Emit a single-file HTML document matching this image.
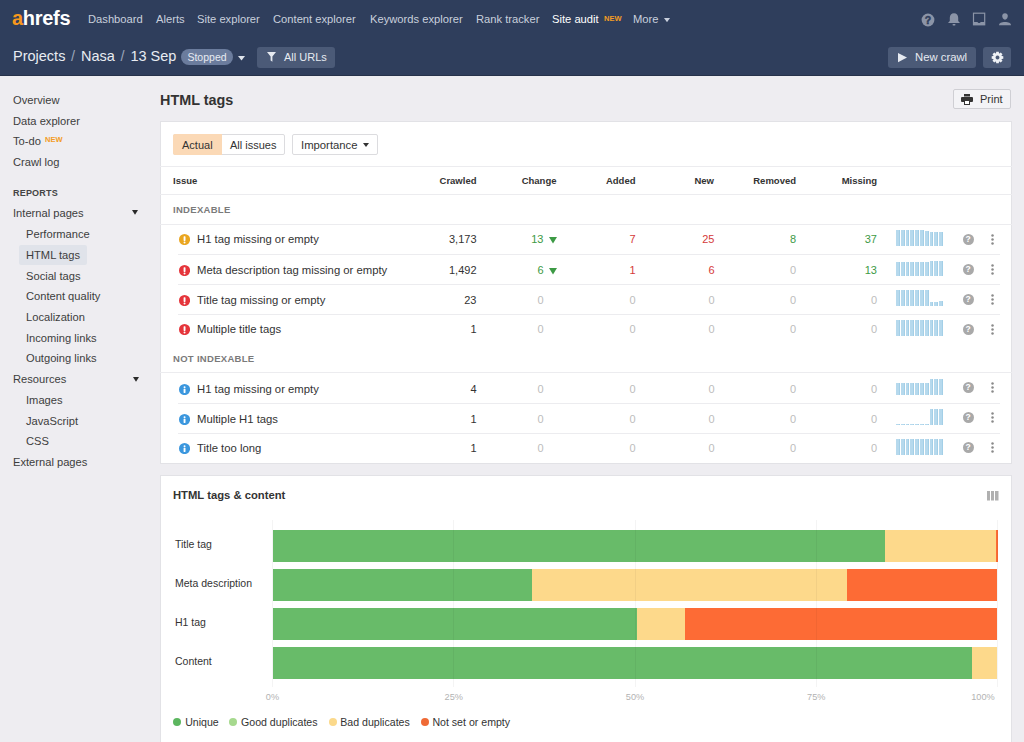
<!DOCTYPE html>
<html><head><meta charset="utf-8">
<style>
*{box-sizing:border-box;margin:0;padding:0}
html,body{width:1024px;height:742px;overflow:hidden;background:#eeedf1;font-family:"Liberation Sans",sans-serif;color:#333;}
.a{position:absolute;white-space:nowrap}
#hdr{position:absolute;left:0;top:0;width:1024px;height:76px;background:#2f3e5c;border-bottom:1px solid #26324a}
.nav{position:absolute;top:11px;font-size:11.2px;line-height:16px;color:#c9d0dd}
.new{font-size:7.5px;font-weight:bold;color:#f39c24;position:absolute}
.hbtn{position:absolute;background:#4b5a77;border-radius:3px}
.side{position:absolute;left:13px;font-size:11.15px;line-height:14px;color:#3d3d3d}
.sub{left:26px}
.card{position:absolute;background:#fff;border:1px solid #e2e2e6}
.th{font-size:9.5px;font-weight:bold;color:#333;line-height:12px}
.sec{font-size:9.5px;font-weight:bold;color:#7a7a7a;letter-spacing:0.3px;line-height:12px}
.line{position:absolute;height:1px;background:#ececef}
.iss{font-size:11.3px;line-height:14px;color:#333}
.num{font-size:11px;line-height:14px;text-align:right;width:60px}
.z{color:#bdbdbd}
.g{color:#3d9a45}
.r{color:#d53a3a}
.ico{position:absolute;width:11px;height:11px;border-radius:50%;color:#fff;font-size:8px;font-weight:bold;text-align:center;line-height:11px}
.help{position:absolute;width:11px;height:11px;border-radius:50%;background:#a9a9a9;color:#fff;font-size:8.5px;font-weight:bold;text-align:center;line-height:11px}
.kb{position:absolute;width:3px;height:11px}
.kb i{display:block;width:2.5px;height:2.5px;border-radius:50%;background:#8a8a8a;margin-bottom:1.5px}
.spark{position:absolute;width:48px;height:16px}
.spark i{position:absolute;bottom:0;width:3.8px;background:#b6d9ed;box-shadow:inset -1px 0 0 #a3cfe7}
.lbl{font-size:10.5px;line-height:14px;color:#333}
.pct{font-size:9.2px;line-height:10px;color:#b3b3b3;text-align:center;width:40px}
.bar{position:absolute;height:32px}
.leg{font-size:10.6px;line-height:14px;color:#333}
.dot{position:absolute;width:8px;height:8px;border-radius:50%}
</style></head><body>
<div id="hdr">
  <div class="a" style="left:12px;top:5px;font-size:20px;font-weight:bold;color:#fff;line-height:26px;letter-spacing:-0.3px"><span style="color:#f7981d">a</span>hrefs</div>
  <div class="a nav" style="left:88px">Dashboard</div>
  <div class="a nav" style="left:156px">Alerts</div>
  <div class="a nav" style="left:197px">Site explorer</div>
  <div class="a nav" style="left:273px">Content explorer</div>
  <div class="a nav" style="left:370px">Keywords explorer</div>
  <div class="a nav" style="left:476px">Rank tracker</div>
  <div class="a nav" style="left:552px;color:#fff">Site audit</div>
  <div class="new" style="left:604px;top:13.5px">NEW</div>
  <div class="a nav" style="left:633px">More</div>
  <svg class="a" style="left:664px;top:17.5px" width="6" height="4.5" viewBox="0 0 6 4.5"><path d="M0 0H6L3 4.2Z" fill="#c9d0dd"/></svg>

  <!-- right icons -->
  <svg class="a" style="left:921px;top:13px" width="14" height="14" viewBox="0 0 14 14"><circle cx="7" cy="7" r="6.4" fill="#8b94a7"/><text x="7" y="10.8" font-size="10.5" font-weight="bold" text-anchor="middle" fill="#2f3e5c" stroke="#2f3e5c" stroke-width="0.5" font-family="Liberation Sans">?</text></svg>
  <svg class="a" style="left:947px;top:12px" width="14" height="14" viewBox="0 0 14 14"><path d="M7 1.2c-2.6 0-4.2 2-4.2 4.6v3.3L1 11h12l-1.8-1.9V5.8C11.2 3.2 9.6 1.2 7 1.2z" fill="#8b94a7"/><rect x="5.5" y="12" width="3" height="1.4" rx="0.7" fill="#8b94a7"/></svg>
  <svg class="a" style="left:972px;top:12px" width="14" height="14" viewBox="0 0 14 14"><rect x="1.5" y="1.2" width="11.2" height="11.6" fill="none" stroke="#8b94a7" stroke-width="1.2"/><path d="M1.2 10H5.3l1.2 1h1.2l1.2-1h3.9v3H1.2z" fill="#8b94a7"/></svg>
  <svg class="a" style="left:998px;top:12px" width="14" height="14" viewBox="0 0 14 14"><path d="M7 1.2c1.8 0 2.8 1.2 2.8 2.9 0 1.9-1.2 3.6-2.8 3.6S4.2 6 4.2 4.1C4.2 2.4 5.2 1.2 7 1.2z" fill="#8b94a7"/><path d="M1 13.2c0-2 2.6-3.2 6-3.2s6 1.2 6 3.2z" fill="#8b94a7"/></svg>

  <!-- second row -->
  <div class="a" style="left:13px;top:47px;font-size:14.5px;line-height:18px;color:#e8ecf2">Projects <span style="color:#9aa4b8;margin:0 2px 0 1.5px">/</span> Nasa <span style="color:#9aa4b8;margin:0 2px 0 1.5px">/</span> 13 Sep</div>
  <div class="a" style="left:181px;top:49px;width:52px;height:16px;border-radius:8px;background:#6b7c9d;color:#e6eaf1;font-size:10.5px;line-height:16px;text-align:center">Stopped</div>
  <svg class="a" style="left:238px;top:56px" width="7" height="5" viewBox="0 0 7 5"><path d="M0 0H7L3.5 4.5Z" fill="#dfe4ec"/></svg>
  <div class="hbtn" style="left:257px;top:47px;width:78px;height:21px"></div>
  <svg class="a" style="left:267px;top:52px" width="9" height="10" viewBox="0 0 9 10"><path d="M0 0H9L5.4 4.6V9.8L3.6 8.6V4.6Z" fill="#e6eaf1"/></svg>
  <div class="a" style="left:284px;top:50px;font-size:11px;line-height:15px;color:#e6eaf1">All URLs</div>

  <div class="hbtn" style="left:888px;top:47px;width:88px;height:21px"></div>
  <svg class="a" style="left:898px;top:53px" width="9" height="10" viewBox="0 0 9 10"><path d="M0 0L9 4.6L0 9.2Z" fill="#e6eaf1"/></svg>
  <div class="a" style="left:915px;top:50px;font-size:11.3px;line-height:15px;color:#e6eaf1">New crawl</div>
  <div class="hbtn" style="left:983px;top:47px;width:28px;height:21px"></div>
  <svg class="a" style="left:990.5px;top:51px" width="13" height="13" viewBox="0 0 24 24"><path fill-rule="evenodd" fill="#eef1f5" d="M19.73 9.27 L22.73 9.60 L22.73 14.40 L19.73 14.73 L19.40 15.53 L21.29 17.89 L17.89 21.29 L15.53 19.40 L14.73 19.73 L14.40 22.73 L9.60 22.73 L9.27 19.73 L8.47 19.40 L6.11 21.29 L2.71 17.89 L4.60 15.53 L4.27 14.73 L1.27 14.40 L1.27 9.60 L4.27 9.27 L4.60 8.47 L2.71 6.11 L6.11 2.71 L8.47 4.60 L9.27 4.27 L9.60 1.27 L14.40 1.27 L14.73 4.27 L15.53 4.60 L17.89 2.71 L21.29 6.11 L19.40 8.47Z M12 8.4a3.6 3.6 0 1 0 0.01 0z"/></svg>
</div>

<!-- sidebar -->
<div class="a side" style="top:93px">Overview</div>
<div class="a side" style="top:114px">Data explorer</div>
<div class="a side" style="top:134px">To-do</div>
<div class="new" style="left:45px;top:135px">NEW</div>
<div class="a side" style="top:155px">Crawl log</div>
<div class="a side" style="top:185.5px;font-size:9px;font-weight:bold;letter-spacing:0.2px;color:#444">REPORTS</div>
<div class="a side" style="top:206px">Internal pages</div>
<svg class="a" style="left:132px;top:210px" width="6" height="5" viewBox="0 0 6 5"><path d="M0 0H6L3 4.7Z" fill="#2a2a2a"/></svg>
<div class="a sub side" style="top:227px">Performance</div>
<div class="a" style="left:19px;top:245px;width:68px;height:20px;background:#e0e3ea;border-radius:2px"></div>
<div class="a sub side" style="top:248px">HTML tags</div>
<div class="a sub side" style="top:269px">Social tags</div>
<div class="a sub side" style="top:289px">Content quality</div>
<div class="a sub side" style="top:310px">Localization</div>
<div class="a sub side" style="top:331px">Incoming links</div>
<div class="a sub side" style="top:351px">Outgoing links</div>
<div class="a side" style="top:372px">Resources</div>
<svg class="a" style="left:132.5px;top:376.5px" width="6" height="5" viewBox="0 0 6 5"><path d="M0 0H6L3 4.7Z" fill="#2a2a2a"/></svg>
<div class="a sub side" style="top:393px">Images</div>
<div class="a sub side" style="top:414px">JavaScript</div>
<div class="a sub side" style="top:434px">CSS</div>
<div class="a side" style="top:455px">External pages</div>

<!-- title -->
<div class="a" style="left:160px;top:91px;font-size:14.4px;font-weight:bold;line-height:18px;color:#333">HTML tags</div>
<div class="a" style="left:953px;top:89px;width:58px;height:20px;border:1px solid #cfcfd4;border-radius:2px;background:#f3f3f6"></div>
<svg class="a" style="left:961px;top:94px" width="12" height="11" viewBox="0 0 12 11"><rect x="3" y="0" width="6" height="2.5" fill="#333"/><rect x="0" y="3" width="12" height="5" rx="1" fill="#333"/><rect x="3" y="6" width="6" height="5" fill="#333"/><rect x="4" y="7" width="4" height="3" fill="#fff"/></svg>
<div class="a" style="left:980px;top:92px;font-size:11px;line-height:14px;color:#333">Print</div>

<!--c1--><div class="card" style="left:160px;top:121px;width:852px;height:343px"></div>
<div class="a" style="left:173px;top:134px;width:112px;height:21px;border:1px solid #dcdcdf;border-radius:2px;background:#fff"></div>
<div class="a" style="left:173px;top:134px;width:49px;height:21px;background:#fbd9b6;border-radius:2px 0 0 2px"></div>
<div class="a" style="left:182px;top:138px;font-size:11px;line-height:14px;color:#333">Actual</div>
<div class="a" style="left:230px;top:138px;font-size:11px;line-height:14px;color:#333">All issues</div>
<div class="a" style="left:292px;top:134px;width:86px;height:21px;border:1px solid #dcdcdf;border-radius:2px;background:#fff"></div>
<div class="a" style="left:301px;top:138px;font-size:11.3px;line-height:14px;color:#333">Importance</div>
<svg class="a" style="left:362.5px;top:143px" width="6" height="4" viewBox="0 0 6 4"><path d="M0 0H6L3 4Z" fill="#333"/></svg>
<div class="line" style="left:160px;top:166px;width:852px;background:#ececef"></div>
<div class="line" style="left:160px;top:194px;width:852px;background:#ececef"></div>
<div class="line" style="left:160px;top:224px;width:852px;background:#ececef"></div>
<div class="line" style="left:160px;top:372px;width:852px;background:#ececef"></div>
<div class="line" style="left:178px;top:254px;width:822px;background:#ececef"></div>
<div class="line" style="left:178px;top:284px;width:822px;background:#ececef"></div>
<div class="line" style="left:178px;top:314px;width:822px;background:#ececef"></div>
<div class="line" style="left:178px;top:403px;width:822px;background:#ececef"></div>
<div class="line" style="left:178px;top:433px;width:822px;background:#ececef"></div>
<div class="a th" style="left:173px;top:174.5px">Issue</div>
<div class="a th" style="left:396.5px;top:174.5px;width:80px;text-align:right">Crawled</div>
<div class="a th" style="left:476.5px;top:174.5px;width:80px;text-align:right">Change</div>
<div class="a th" style="left:555.5px;top:174.5px;width:80px;text-align:right">Added</div>
<div class="a th" style="left:634px;top:174.5px;width:80px;text-align:right">New</div>
<div class="a th" style="left:716px;top:174.5px;width:80px;text-align:right">Removed</div>
<div class="a th" style="left:797px;top:174.5px;width:80px;text-align:right">Missing</div>
<div class="a sec" style="left:173px;top:204px">INDEXABLE</div>
<div class="a sec" style="left:173px;top:352.5px">NOT INDEXABLE</div>
<svg class="a" style="left:179px;top:234px" width="11.1" height="11.1" viewBox="0 0 11.1 11.1"><circle cx="5.55" cy="5.55" r="5.55" fill="#eaa620"/><rect x="4.6" y="2.3" width="1.9" height="4.6" rx="0.6" fill="#fff"/><circle cx="5.55" cy="8.4" r="1" fill="#fff"/></svg>
<div class="a iss" style="left:197px;top:232px">H1 tag missing or empty</div>
<div class="a num " style="left:416.5px;top:232px">3,173</div>
<div class="a num g" style="left:483.5px;top:232px">13</div>
<svg class="a" style="left:549px;top:236.5px" width="8" height="7" viewBox="0 0 8 7"><path d="M0 0H8L4 6.5Z" fill="#3d9a45"/></svg>
<div class="a num r" style="left:575.5px;top:232px">7</div>
<div class="a num r" style="left:654.5px;top:232px">25</div>
<div class="a num g" style="left:736px;top:232px">8</div>
<div class="a num g" style="left:817px;top:232px">37</div>
<div class="spark" style="left:896px;top:230.3px"><i style="left:0px;height:16px"></i><i style="left:4.8px;height:16px"></i><i style="left:9.6px;height:16px"></i><i style="left:14.4px;height:16px"></i><i style="left:19.2px;height:16px"></i><i style="left:24px;height:16.5px"></i><i style="left:28.8px;height:15px"></i><i style="left:33.6px;height:14.5px"></i><i style="left:38.4px;height:14.5px"></i><i style="left:43.2px;height:14.5px"></i></div>
<div class="help" style="left:962.5px;top:233.5px">?</div>
<svg class="a" style="left:991px;top:233.6px" width="3" height="11" viewBox="0 0 3 11"><circle cx="1.5" cy="1.4" r="1.25" fill="#8a8a8a"/><circle cx="1.5" cy="5.5" r="1.25" fill="#8a8a8a"/><circle cx="1.5" cy="9.6" r="1.25" fill="#8a8a8a"/></svg>
<svg class="a" style="left:179px;top:265px" width="11.1" height="11.1" viewBox="0 0 11.1 11.1"><circle cx="5.55" cy="5.55" r="5.55" fill="#e5353b"/><rect x="4.6" y="2.3" width="1.9" height="4.6" rx="0.6" fill="#fff"/><circle cx="5.55" cy="8.4" r="1" fill="#fff"/></svg>
<div class="a iss" style="left:197px;top:263px">Meta description tag missing or empty</div>
<div class="a num " style="left:416.5px;top:263px">1,492</div>
<div class="a num g" style="left:483.5px;top:263px">6</div>
<svg class="a" style="left:549px;top:267.5px" width="8" height="7" viewBox="0 0 8 7"><path d="M0 0H8L4 6.5Z" fill="#3d9a45"/></svg>
<div class="a num r" style="left:575.5px;top:263px">1</div>
<div class="a num r" style="left:654.5px;top:263px">6</div>
<div class="a num z" style="left:736px;top:263px">0</div>
<div class="a num g" style="left:817px;top:263px">13</div>
<div class="spark" style="left:896px;top:260.3px"><i style="left:0px;height:14.5px"></i><i style="left:4.8px;height:14px"></i><i style="left:9.6px;height:14px"></i><i style="left:14.4px;height:14px"></i><i style="left:19.2px;height:14px"></i><i style="left:24px;height:14px"></i><i style="left:28.8px;height:14px"></i><i style="left:33.6px;height:15.8px"></i><i style="left:38.4px;height:15.8px"></i><i style="left:43.2px;height:15.8px"></i></div>
<div class="help" style="left:962.5px;top:263.5px">?</div>
<svg class="a" style="left:991px;top:263.6px" width="3" height="11" viewBox="0 0 3 11"><circle cx="1.5" cy="1.4" r="1.25" fill="#8a8a8a"/><circle cx="1.5" cy="5.5" r="1.25" fill="#8a8a8a"/><circle cx="1.5" cy="9.6" r="1.25" fill="#8a8a8a"/></svg>
<svg class="a" style="left:179px;top:295px" width="11.1" height="11.1" viewBox="0 0 11.1 11.1"><circle cx="5.55" cy="5.55" r="5.55" fill="#e5353b"/><rect x="4.6" y="2.3" width="1.9" height="4.6" rx="0.6" fill="#fff"/><circle cx="5.55" cy="8.4" r="1" fill="#fff"/></svg>
<div class="a iss" style="left:197px;top:293px">Title tag missing or empty</div>
<div class="a num " style="left:416.5px;top:293px">23</div>
<div class="a num z" style="left:483.5px;top:293px">0</div>
<div class="a num z" style="left:575.5px;top:293px">0</div>
<div class="a num z" style="left:654.5px;top:293px">0</div>
<div class="a num z" style="left:736px;top:293px">0</div>
<div class="a num z" style="left:817px;top:293px">0</div>
<div class="spark" style="left:896px;top:290.3px"><i style="left:0px;height:16px"></i><i style="left:4.8px;height:16px"></i><i style="left:9.6px;height:16px"></i><i style="left:14.4px;height:16px"></i><i style="left:19.2px;height:16px"></i><i style="left:24px;height:16px"></i><i style="left:28.8px;height:16px"></i><i style="left:33.6px;height:4.5px"></i><i style="left:38.4px;height:4.5px"></i><i style="left:43.2px;height:5px"></i></div>
<div class="help" style="left:962.5px;top:293.5px">?</div>
<svg class="a" style="left:991px;top:293.6px" width="3" height="11" viewBox="0 0 3 11"><circle cx="1.5" cy="1.4" r="1.25" fill="#8a8a8a"/><circle cx="1.5" cy="5.5" r="1.25" fill="#8a8a8a"/><circle cx="1.5" cy="9.6" r="1.25" fill="#8a8a8a"/></svg>
<svg class="a" style="left:179px;top:324px" width="11.1" height="11.1" viewBox="0 0 11.1 11.1"><circle cx="5.55" cy="5.55" r="5.55" fill="#e5353b"/><rect x="4.6" y="2.3" width="1.9" height="4.6" rx="0.6" fill="#fff"/><circle cx="5.55" cy="8.4" r="1" fill="#fff"/></svg>
<div class="a iss" style="left:197px;top:322px">Multiple title tags</div>
<div class="a num " style="left:416.5px;top:322px">1</div>
<div class="a num z" style="left:483.5px;top:322px">0</div>
<div class="a num z" style="left:575.5px;top:322px">0</div>
<div class="a num z" style="left:654.5px;top:322px">0</div>
<div class="a num z" style="left:736px;top:322px">0</div>
<div class="a num z" style="left:817px;top:322px">0</div>
<div class="spark" style="left:896px;top:320.3px"><i style="left:0px;height:16px"></i><i style="left:4.8px;height:16px"></i><i style="left:9.6px;height:16px"></i><i style="left:14.4px;height:16px"></i><i style="left:19.2px;height:16px"></i><i style="left:24px;height:16px"></i><i style="left:28.8px;height:16px"></i><i style="left:33.6px;height:16px"></i><i style="left:38.4px;height:16px"></i><i style="left:43.2px;height:16px"></i></div>
<div class="help" style="left:962.5px;top:323.5px">?</div>
<svg class="a" style="left:991px;top:323.6px" width="3" height="11" viewBox="0 0 3 11"><circle cx="1.5" cy="1.4" r="1.25" fill="#8a8a8a"/><circle cx="1.5" cy="5.5" r="1.25" fill="#8a8a8a"/><circle cx="1.5" cy="9.6" r="1.25" fill="#8a8a8a"/></svg>
<svg class="a" style="left:179px;top:384px" width="11.1" height="11.1" viewBox="0 0 11.1 11.1"><circle cx="5.55" cy="5.55" r="5.55" fill="#3b97de"/><circle cx="5.55" cy="3.2" r="1" fill="#fff"/><rect x="4.6" y="4.7" width="1.9" height="4.2" rx="0.4" fill="#fff"/></svg>
<div class="a iss" style="left:197px;top:382px">H1 tag missing or empty</div>
<div class="a num " style="left:416.5px;top:382px">4</div>
<div class="a num z" style="left:483.5px;top:382px">0</div>
<div class="a num z" style="left:575.5px;top:382px">0</div>
<div class="a num z" style="left:654.5px;top:382px">0</div>
<div class="a num z" style="left:736px;top:382px">0</div>
<div class="a num z" style="left:817px;top:382px">0</div>
<div class="spark" style="left:896px;top:378.8px"><i style="left:0px;height:11.4px"></i><i style="left:4.8px;height:11.4px"></i><i style="left:9.6px;height:11.4px"></i><i style="left:14.4px;height:11.4px"></i><i style="left:19.2px;height:11.4px"></i><i style="left:24px;height:11.4px"></i><i style="left:28.8px;height:11.4px"></i><i style="left:33.6px;height:15.6px"></i><i style="left:38.4px;height:15.6px"></i><i style="left:43.2px;height:15.6px"></i></div>
<div class="help" style="left:962.5px;top:382px">?</div>
<svg class="a" style="left:991px;top:382.1px" width="3" height="11" viewBox="0 0 3 11"><circle cx="1.5" cy="1.4" r="1.25" fill="#8a8a8a"/><circle cx="1.5" cy="5.5" r="1.25" fill="#8a8a8a"/><circle cx="1.5" cy="9.6" r="1.25" fill="#8a8a8a"/></svg>
<svg class="a" style="left:179px;top:414px" width="11.1" height="11.1" viewBox="0 0 11.1 11.1"><circle cx="5.55" cy="5.55" r="5.55" fill="#3b97de"/><circle cx="5.55" cy="3.2" r="1" fill="#fff"/><rect x="4.6" y="4.7" width="1.9" height="4.2" rx="0.4" fill="#fff"/></svg>
<div class="a iss" style="left:197px;top:412px">Multiple H1 tags</div>
<div class="a num " style="left:416.5px;top:412px">1</div>
<div class="a num z" style="left:483.5px;top:412px">0</div>
<div class="a num z" style="left:575.5px;top:412px">0</div>
<div class="a num z" style="left:654.5px;top:412px">0</div>
<div class="a num z" style="left:736px;top:412px">0</div>
<div class="a num z" style="left:817px;top:412px">0</div>
<div class="spark" style="left:896px;top:408.8px"><i style="left:0px;height:1px"></i><i style="left:4.8px;height:1px"></i><i style="left:9.6px;height:1px"></i><i style="left:14.4px;height:1px"></i><i style="left:19.2px;height:1px"></i><i style="left:24px;height:1px"></i><i style="left:28.8px;height:1px"></i><i style="left:33.6px;height:15.8px"></i><i style="left:38.4px;height:15.8px"></i><i style="left:43.2px;height:15.8px"></i></div>
<div class="help" style="left:962.5px;top:412px">?</div>
<svg class="a" style="left:991px;top:412.1px" width="3" height="11" viewBox="0 0 3 11"><circle cx="1.5" cy="1.4" r="1.25" fill="#8a8a8a"/><circle cx="1.5" cy="5.5" r="1.25" fill="#8a8a8a"/><circle cx="1.5" cy="9.6" r="1.25" fill="#8a8a8a"/></svg>
<svg class="a" style="left:179px;top:443px" width="11.1" height="11.1" viewBox="0 0 11.1 11.1"><circle cx="5.55" cy="5.55" r="5.55" fill="#3b97de"/><circle cx="5.55" cy="3.2" r="1" fill="#fff"/><rect x="4.6" y="4.7" width="1.9" height="4.2" rx="0.4" fill="#fff"/></svg>
<div class="a iss" style="left:197px;top:441px">Title too long</div>
<div class="a num " style="left:416.5px;top:441px">1</div>
<div class="a num z" style="left:483.5px;top:441px">0</div>
<div class="a num z" style="left:575.5px;top:441px">0</div>
<div class="a num z" style="left:654.5px;top:441px">0</div>
<div class="a num z" style="left:736px;top:441px">0</div>
<div class="a num z" style="left:817px;top:441px">0</div>
<div class="spark" style="left:896px;top:438.8px"><i style="left:0px;height:16px"></i><i style="left:4.8px;height:16px"></i><i style="left:9.6px;height:16px"></i><i style="left:14.4px;height:16px"></i><i style="left:19.2px;height:16px"></i><i style="left:24px;height:16px"></i><i style="left:28.8px;height:16px"></i><i style="left:33.6px;height:16px"></i><i style="left:38.4px;height:16px"></i><i style="left:43.2px;height:16px"></i></div>
<div class="help" style="left:962.5px;top:442px">?</div>
<svg class="a" style="left:991px;top:442.1px" width="3" height="11" viewBox="0 0 3 11"><circle cx="1.5" cy="1.4" r="1.25" fill="#8a8a8a"/><circle cx="1.5" cy="5.5" r="1.25" fill="#8a8a8a"/><circle cx="1.5" cy="9.6" r="1.25" fill="#8a8a8a"/></svg><!--/c1-->
<!--c2--><div class="card" style="left:160px;top:475px;width:852px;height:300px"></div>
<div class="a" style="left:173px;top:488px;font-size:11.25px;font-weight:bold;line-height:14px;color:#333">HTML tags &amp; content</div>
<svg class="a" style="left:987px;top:491px" width="12" height="10" viewBox="0 0 12 10"><rect x="0" y="0" width="3" height="9.5" fill="#b0b0b0"/><rect x="4" y="0" width="3" height="9.5" fill="#b0b0b0"/><rect x="8" y="0" width="3.5" height="9.5" fill="#b0b0b0"/></svg>
<div class="a pct" style="left:252.5px;top:692px">0%</div>
<div class="a pct" style="left:433.75px;top:692px">25%</div>
<div class="a pct" style="left:615px;top:692px">50%</div>
<div class="a pct" style="left:796.25px;top:692px">75%</div>
<div class="a pct" style="left:963px;top:692px">100%</div>
<div class="a lbl" style="left:175px;top:536.5px">Title tag</div>
<div class="bar" style="left:272.5px;top:530px;width:612.3px;background:#68bb69"></div>
<div class="bar" style="left:884.8px;top:530px;width:111.2px;background:#fdd98b"></div>
<div class="bar" style="left:996px;top:530px;width:1.5px;background:#fd6b35"></div>
<div class="a lbl" style="left:175px;top:575.5px">Meta description</div>
<div class="bar" style="left:272.5px;top:569px;width:259.6px;background:#68bb69"></div>
<div class="bar" style="left:532.1px;top:569px;width:314.7px;background:#fdd98b"></div>
<div class="bar" style="left:846.8px;top:569px;width:150.7px;background:#fd6b35"></div>
<div class="a lbl" style="left:175px;top:614.5px">H1 tag</div>
<div class="bar" style="left:272.5px;top:608px;width:364.5px;background:#68bb69"></div>
<div class="bar" style="left:637px;top:608px;width:48.2px;background:#fdd98b"></div>
<div class="bar" style="left:685.2px;top:608px;width:312.3px;background:#fd6b35"></div>
<div class="a lbl" style="left:175px;top:653.5px">Content</div>
<div class="bar" style="left:272.5px;top:647px;width:699.9px;background:#68bb69"></div>
<div class="bar" style="left:972.4px;top:647px;width:25.1px;background:#fdd98b"></div>
<div class="a" style="left:272px;top:520px;width:1px;height:167px;background:rgba(0,0,0,0.045)"></div>
<div class="a" style="left:453.25px;top:520px;width:1px;height:167px;background:rgba(0,0,0,0.045)"></div>
<div class="a" style="left:634.5px;top:520px;width:1px;height:167px;background:rgba(0,0,0,0.045)"></div>
<div class="a" style="left:815.75px;top:520px;width:1px;height:167px;background:rgba(0,0,0,0.045)"></div>
<div class="a" style="left:997px;top:520px;width:1px;height:167px;background:rgba(0,0,0,0.045)"></div>
<div class="dot" style="left:172.7px;top:718px;background:#5cb65f"></div>
<div class="a leg" style="left:185.2px;top:715px">Unique</div>
<div class="dot" style="left:229.3px;top:718px;background:#a6d98e"></div>
<div class="a leg" style="left:241px;top:715px">Good duplicates</div>
<div class="dot" style="left:328.5px;top:718px;background:#fbd98b"></div>
<div class="a leg" style="left:340.3px;top:715px">Bad duplicates</div>
<div class="dot" style="left:420.5px;top:718px;background:#ef6a36"></div>
<div class="a leg" style="left:432.4px;top:715px">Not set or empty</div><!--/c2-->
</body></html>
